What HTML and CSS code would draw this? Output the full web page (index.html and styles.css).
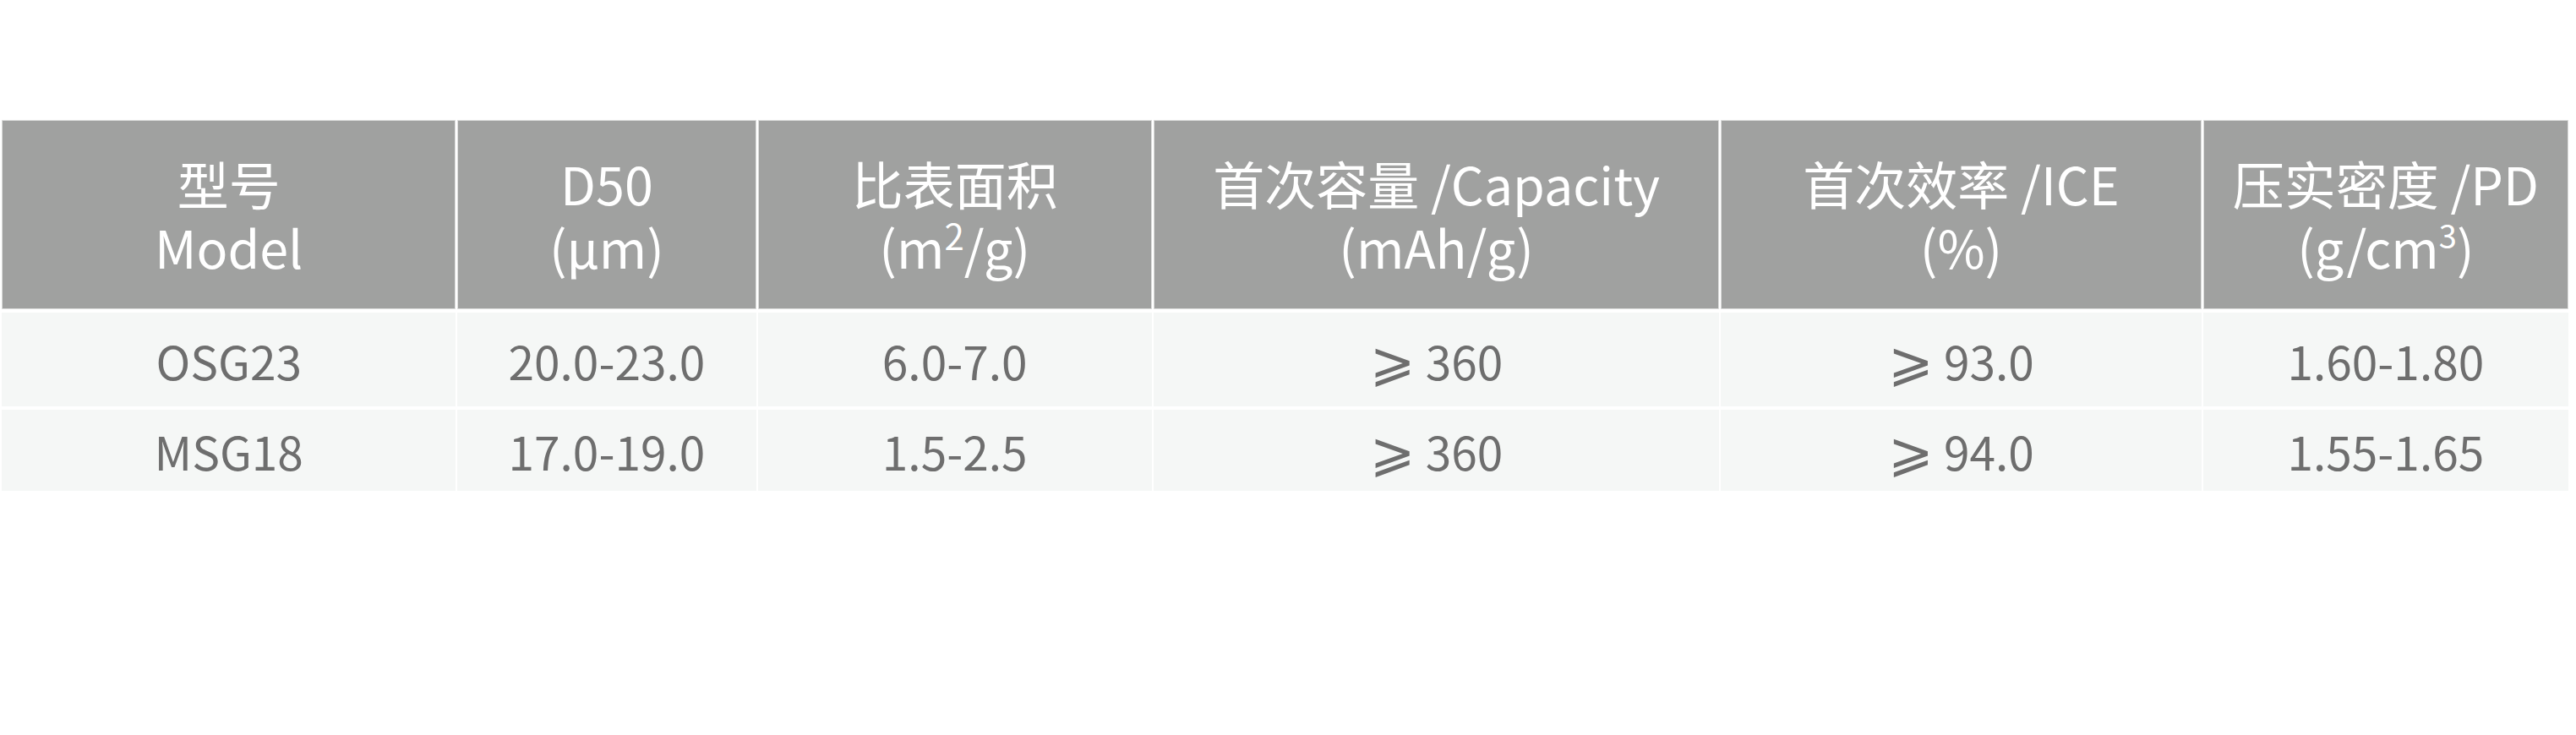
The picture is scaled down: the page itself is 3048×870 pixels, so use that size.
FILE: index.html
```html
<!DOCTYPE html>
<html lang="zh-CN">
<head>
<meta charset="utf-8">
<title>产品参数</title>
<link rel="stylesheet" href="styles.css">
</head>
<body>
<div class="wrap">
  <table class="spec">
    <colgroup>
      <col class="c1"><col class="c2"><col class="c3"><col class="c4"><col class="c5"><col class="c6">
    </colgroup>
    <thead>
      <tr>
        <th>型号<br>Model</th>
        <th>D50<br>(µm)</th>
        <th>比表面积<br>(m<sup>2</sup>/g)</th>
        <th>首次容量 /Capacity<br>(mAh/g)</th>
        <th>首次效率 /ICE<br>(%)</th>
        <th>压实密度 /PD<br>(g/cm<sup class="s3">3</sup>)</th>
      </tr>
    </thead>
    <tbody>
      <tr class="r1">
        <td>OSG23</td>
        <td>20.0-23.0</td>
        <td>6.0-7.0</td>
        <td><span class="ge">⩾</span> 360</td>
        <td><span class="ge">⩾</span> 93.0</td>
        <td>1.60-1.80</td>
      </tr>
      <tr class="r2">
        <td>MSG18</td>
        <td>17.0-19.0</td>
        <td>1.5-2.5</td>
        <td><span class="ge">⩾</span> 360</td>
        <td><span class="ge">⩾</span> 94.0</td>
        <td>1.55-1.65</td>
      </tr>
    </tbody>
  </table>
</div>
</body>
</html>
```
FILE: styles.css
```css
html, body {
  margin: 0;
  padding: 0;
  background: #ffffff;
}
.wrap {
  padding-top: 138px;
}
.spec {
  table-layout: fixed;
  width: 3041px;
  border-collapse: separate;
  border-spacing: 2px 4px;
  font-family: "Noto Sans CJK SC", "Noto Sans", sans-serif;
}
.c1 { width: 537px; }
.c2 { width: 353px; }
.c3 { width: 466px; }
.c4 { width: 669px; }
.c5 { width: 568px; }
.c6 { width: 432px; }
.spec th {
  height: 222px;
  padding: 0;
  background: #a0a1a0;
  border: 1px solid #dcdddc;
  color: #ffffff;
  font-weight: 400;
  font-size: 61px;
  line-height: 75px;
  text-align: center;
  vertical-align: middle;
}
.spec th sup {
  font-size: 42px;
  line-height: 0;
  vertical-align: 22px;
}
.spec th sup.s3 {
  font-size: 38px;
  vertical-align: 24px;
}
.spec td {
  padding: 0;
  background: #f5f7f6;
  color: #6e6e6e;
  font-size: 55px;
  line-height: 60px;
  text-align: center;
  vertical-align: middle;
}
.r1 td { height: 111px; }
.r2 td { height: 96px; }
.ge {
  font-family: "DejaVu Sans", sans-serif;
  font-size: 64px;
  line-height: 0;
}
```
